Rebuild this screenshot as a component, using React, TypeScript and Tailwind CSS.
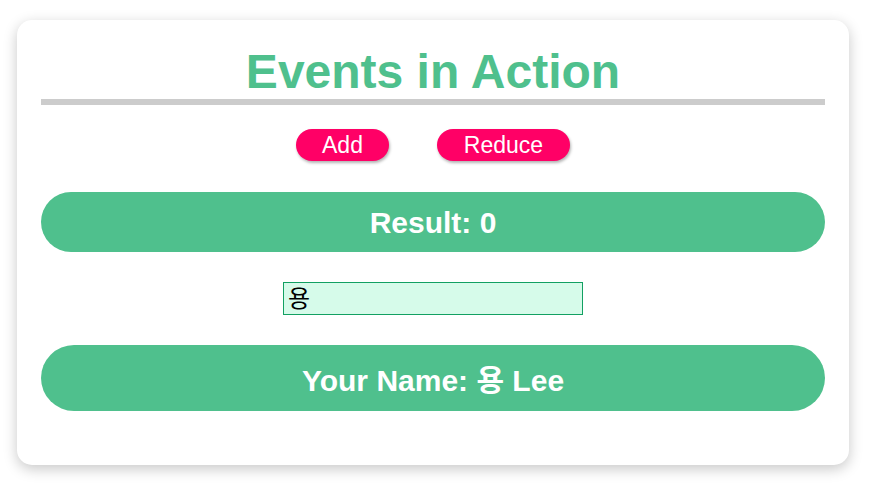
import { useState } from "react";

const font = { fontFamily: '"Liberation Sans", Arial, "Noto Sans CJK KR", sans-serif' };

export default function App() {
	const [count, setCount] = useState(0);
	const [name, setName] = useState("용");

	return (
		<div className="min-h-[502px] bg-white pt-[20px]" style={font}>
			<div className="ml-[17px] w-[832px] rounded-[15px] bg-white px-6 pt-[25px] pb-[54px] shadow-[0_4px_14px_rgba(0,0,0,0.22)]">
				<h1 className="border-b-[6px] border-[#cccccc] text-center text-[48px] font-bold leading-[54px] text-[#4fc08d]">
					Events in Action
				</h1>
				<div className="mt-6 flex justify-center gap-12">
					<button
						className="h-8 w-[93px] rounded-full bg-[#ff0066] text-[23px] leading-none text-white shadow-[1px_2px_3px_rgba(0,0,0,0.3)]"
						onClick={() => setCount(count + 1)}
					>
						Add
					</button>
					<button
						className="h-8 w-[133px] rounded-full bg-[#ff0066] text-[23px] leading-none text-white shadow-[1px_2px_3px_rgba(0,0,0,0.3)]"
						onClick={() => setCount(count - 1)}
					>
						Reduce
					</button>
				</div>
				<div className="mt-[31px] flex h-[60px] items-center justify-center rounded-full bg-[#4fc08d] text-[30px] font-bold text-white">
					Result: {count}
				</div>
				<div className="mt-[30px] flex justify-center">
					<input
						className="h-[33px] w-[300px] border border-[#12a062] bg-[#d6fbea] px-1 text-[24px] text-black outline-none"
						style={font}
						value={name}
						onChange={(e) => setName(e.target.value)}
					/>
				</div>
				<div className="mt-[30px] flex h-[66px] items-center justify-center rounded-full bg-[#4fc08d] pt-1 text-[30px] font-bold text-white">
					Your Name: {name} Lee
				</div>
			</div>
		</div>
	);
}
